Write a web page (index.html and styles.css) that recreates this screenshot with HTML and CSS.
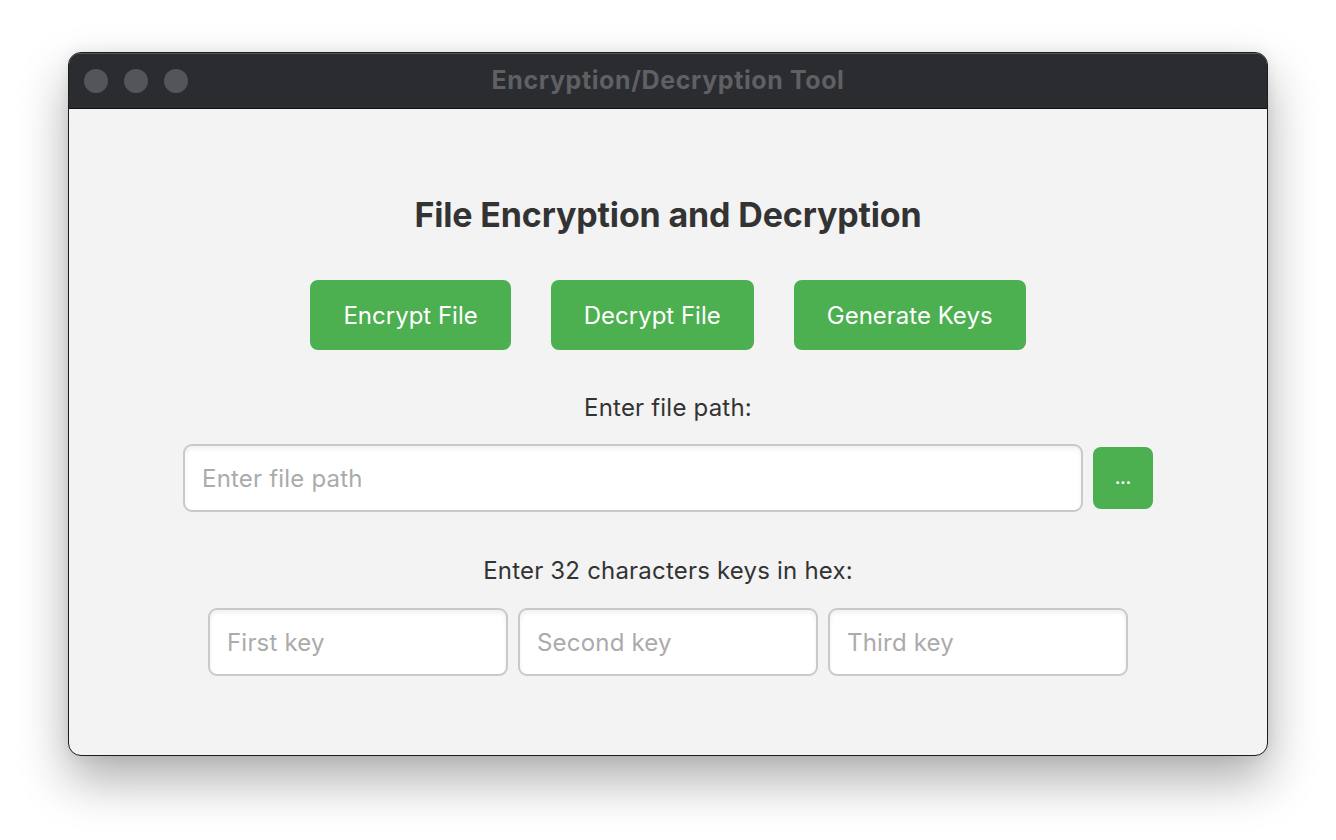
FILE: index.html
```html
<!DOCTYPE html>
<html>
<head>
<meta charset="utf-8">
<link rel="stylesheet" href="styles.css">
</head>
<body>
<div class="window">
  <div class="titlebar">
    <div class="lights"><span class="light"></span><span class="light"></span><span class="light"></span></div>
    <div class="title">Encryption/Decryption Tool</div>
  </div>
  <div class="content">
    <h1 class="heading">File Encryption and Decryption</h1>
    <div class="actions">
      <button class="btn">Encrypt File</button>
      <button class="btn">Decrypt File</button>
      <button class="btn">Generate Keys</button>
    </div>
    <div class="label label-path">Enter file path:</div>
    <div class="path-row">
      <input class="field field-path" type="text" placeholder="Enter file path">
      <button class="browse">...</button>
    </div>
    <div class="label label-keys">Enter 32 characters keys in hex:</div>
    <div class="keys-row">
      <input class="field field-key" type="text" placeholder="First key">
      <input class="field field-key" type="text" placeholder="Second key">
      <input class="field field-key" type="text" placeholder="Third key">
    </div>
  </div>
</div>
</body>
</html>
```

FILE: styles.css
```css
html, body {
  margin: 0;
  padding: 0;
  background: #ffffff;
  font-family: "Inter", "Liberation Sans", sans-serif;
}
body {
  width: 1336px;
  height: 840px;
  overflow: hidden;
}
.window {
  margin: 52px 0 0 68px;
  width: 1200px;
  height: 704px;
  box-sizing: border-box;
  border: 1px solid #1c1c1e;
  border-radius: 13px;
  overflow: hidden;
  background: #f3f3f3;
  box-shadow: 0 24px 50px rgba(0,0,0,0.32), 0 0 12px rgba(0,0,0,0.08);
  display: flex;
  flex-direction: column;
}
.titlebar {
  height: 55px;
  background: #2b2c30;
  border-bottom: 1px solid #111113;
  box-shadow: inset 0 1px 0 #56575b;
  display: flex;
  align-items: center;
  position: relative;
  flex: none;
}
.lights {
  display: flex;
  gap: 16px;
  padding-left: 15px;
}
.light {
  width: 24px;
  height: 24px;
  border-radius: 50%;
  background: #545559;
}
.title {
  position: absolute;
  left: 0;
  right: 0;
  top: 12px;
  line-height: 30px;
  text-align: center;
  color: #5f6064;
  font-weight: 700;
  font-size: 25px;
  letter-spacing: 0.6px;
}
.content {
  flex: 1;
  display: flex;
  flex-direction: column;
  align-items: center;
  padding-top: 86px;
}
.heading {
  margin: 0;
  font-size: 34px;
  line-height: 40px;
  font-weight: 700;
  color: #333333;
  letter-spacing: -0.15px;
}
.actions {
  display: flex;
  gap: 40px;
  margin-top: 45px;
}
.btn {
  height: 70px;
  padding: 0 33px;
  border: none;
  border-radius: 8px;
  background: #4caf50;
  color: #ffffff;
  font-family: "Inter", "Liberation Sans", sans-serif;
  font-size: 24px;
  letter-spacing: 0;
}
.label {
  font-size: 24px;
  line-height: 28px;
  color: #333333;
  letter-spacing: 0.2px;
}
.label-path { margin-top: 44px; }
.label-keys { margin-top: 45px; }
.path-row {
  display: flex;
  align-items: center;
  gap: 10px;
  margin-top: 22px;
}
.field {
  box-sizing: border-box;
  height: 68px;
  border: 2px solid #c9c9c9;
  border-radius: 9px;
  background: #ffffff;
  box-shadow: inset 0 3px 4px rgba(0,0,0,0.06);
  padding: 0 17px;
  font-family: "Inter", "Liberation Sans", sans-serif;
  font-size: 24px;
  letter-spacing: 0.2px;
  color: #333333;
  outline: none;
}
.field::placeholder {
  color: #ababab;
}
.field-path { width: 900px; }
.browse {
  width: 60px;
  height: 62px;
  border: none;
  border-radius: 8px;
  background: #4caf50;
  color: #ffffff;
  font-family: "Inter", "Liberation Sans", sans-serif;
  font-size: 16px;
  font-weight: 700;
  padding: 0;
}
.keys-row {
  display: flex;
  gap: 10px;
  margin-top: 23px;
}
.field-key { width: 300px; }
```
